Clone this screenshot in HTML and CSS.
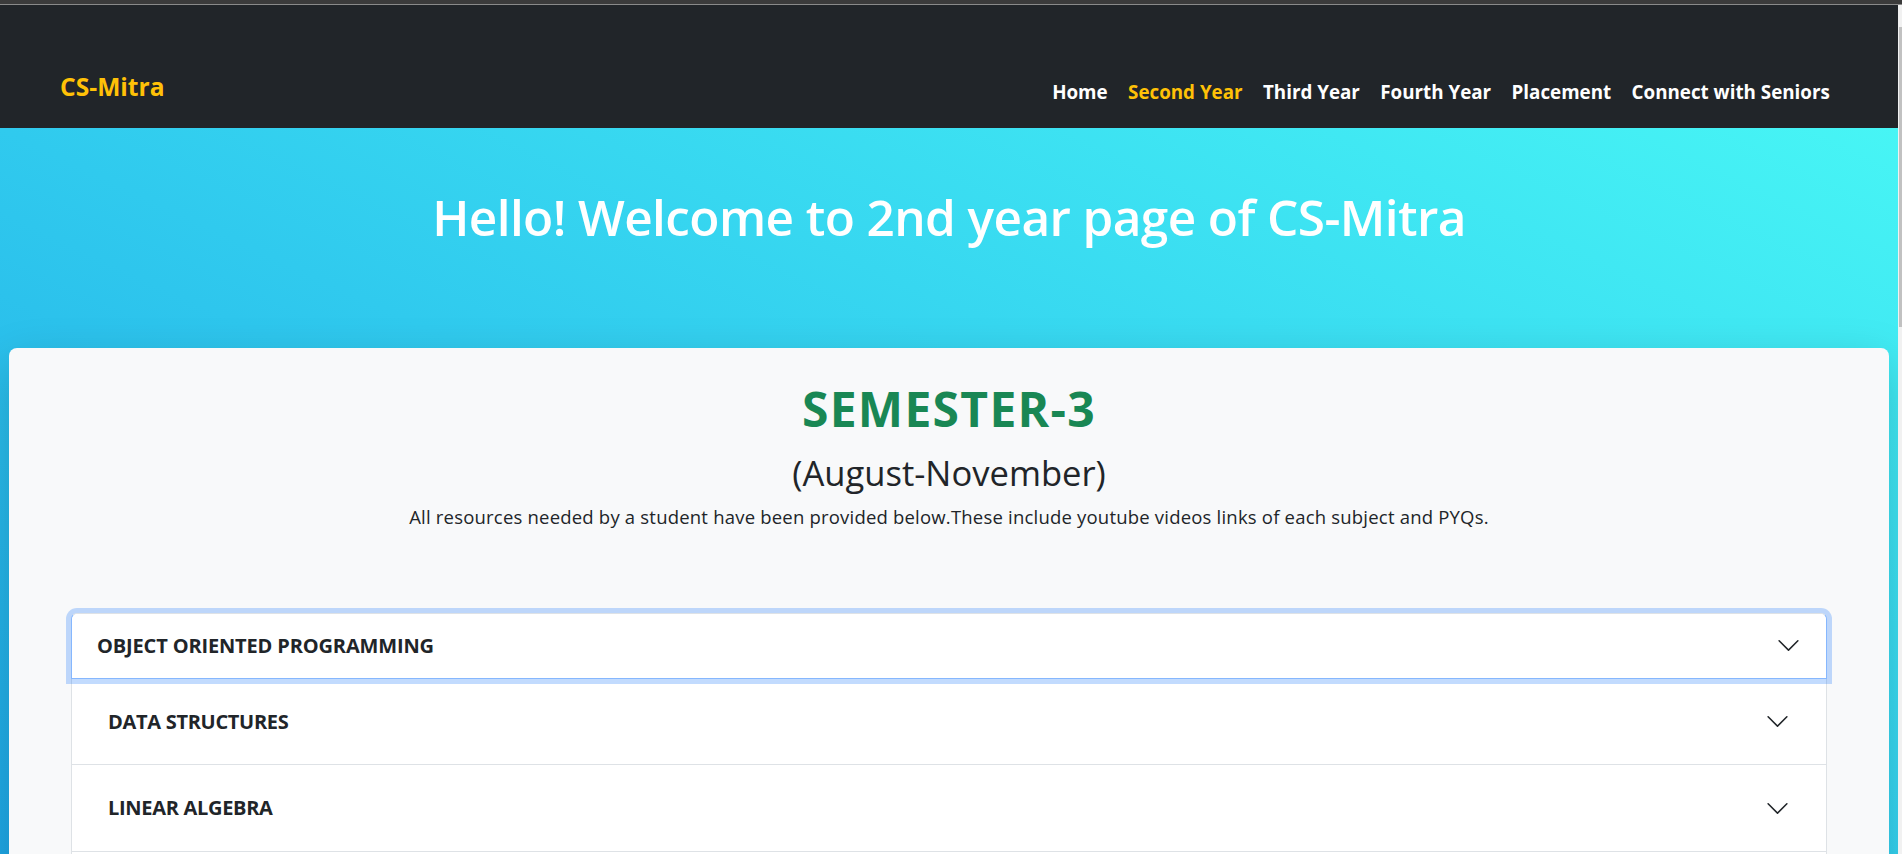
FILE: index.html
```html
<!DOCTYPE html>
<html lang="en">
<head>
<meta charset="utf-8">
<title>CS-Mitra | Second Year</title>
<link rel="stylesheet" href="styles.css">
</head>
<body>
<div class="chrome"></div>
<div class="viewport">
  <div class="site">
    <nav class="navbar">
      <a class="brand" href="#">CS-Mitra</a>
      <ul class="nav">
        <li><a class="nav-link" href="#">Home</a></li>
        <li><a class="nav-link active" href="#">Second Year</a></li>
        <li><a class="nav-link" href="#">Third Year</a></li>
        <li><a class="nav-link" href="#">Fourth Year</a></li>
        <li><a class="nav-link" href="#">Placement</a></li>
        <li><a class="nav-link" href="#">Connect with Seniors</a></li>
      </ul>
    </nav>
    <main class="page">
      <header class="hero">
        <h1 class="hero-title">Hello! Welcome to 2nd year page of CS-Mitra</h1>
      </header>
      <section class="card">
        <h2 class="sem-title">SEMESTER-3</h2>
        <h3 class="sem-months">(August-November)</h3>
        <p class="sem-desc">All resources needed by a student have been provided below.These include youtube videos links of each subject and PYQs.</p>
        <div class="accordion">
          <div class="acc-item acc-focus">
            <button class="acc-btn">OBJECT ORIENTED PROGRAMMING
              <svg class="chev" viewBox="0 0 16 16"><path d="M1.646 4.646a.5.5 0 0 1 .708 0L8 10.293l5.646-5.647a.5.5 0 0 1 .708.708l-6 6a.5.5 0 0 1-.708 0l-6-6a.5.5 0 0 1 0-.708z"/></svg>
            </button>
          </div>
          <div class="acc-item">
            <button class="acc-btn">DATA STRUCTURES
              <svg class="chev" viewBox="0 0 16 16"><path d="M1.646 4.646a.5.5 0 0 1 .708 0L8 10.293l5.646-5.647a.5.5 0 0 1 .708.708l-6 6a.5.5 0 0 1-.708 0l-6-6a.5.5 0 0 1 0-.708z"/></svg>
            </button>
          </div>
          <div class="acc-item">
            <button class="acc-btn">LINEAR ALGEBRA
              <svg class="chev" viewBox="0 0 16 16"><path d="M1.646 4.646a.5.5 0 0 1 .708 0L8 10.293l5.646-5.647a.5.5 0 0 1 .708.708l-6 6a.5.5 0 0 1-.708 0l-6-6a.5.5 0 0 1 0-.708z"/></svg>
            </button>
          </div>
          <div class="acc-item">
            <button class="acc-btn">DIGITAL ELECTRONICS
              <svg class="chev" viewBox="0 0 16 16"><path d="M1.646 4.646a.5.5 0 0 1 .708 0L8 10.293l5.646-5.647a.5.5 0 0 1 .708.708l-6 6a.5.5 0 0 1-.708 0l-6-6a.5.5 0 0 1 0-.708z"/></svg>
            </button>
          </div>
        </div>
      </section>
    </main>
  </div>
  <div class="scrollbar"><div class="thumb"></div></div>
</div>
</body>
</html>
```

FILE: styles.css
```css
* { box-sizing: border-box; }
html, body { margin: 0; padding: 0; }
body {
  overflow: hidden;
  height: 854px;
  font-family: "Open Sans", "Noto Sans", sans-serif;
  color: #212529;
  background: #f8f9fa;
}
.chrome {
  height: 5px;
  background: #3b3b3b;
  border-bottom: 1px solid #8a8a8a;
}
.viewport { display: flex; height: 849px; }
.site { flex: 1; min-width: 0; overflow: hidden; }
.scrollbar { width: 4px; background: #f1f1f1; padding-top: 22px; }
.thumb { width: 3px; height: 300px; background: #c1c1c1; margin-left: 1px; }

.navbar {
  height: 123px;
  background: #212529;
  display: flex;
  justify-content: space-between;
  align-items: flex-start;
  padding: 0 58px 0 60px;
}
.brand {
  margin-top: 63px;
  font-size: 24.6px;
  font-weight: 700;
  line-height: 37.5px;
  color: #ffc107;
  text-decoration: none;
}
.nav {
  margin: 73px 0 0;
  padding: 0;
  list-style: none;
  display: flex;
}
.nav-link {
  display: block;
  padding: 0 10.2px;
  font-size: 18.8px;
  font-weight: 700;
  line-height: 29.25px;
  color: #fff;
  text-decoration: none;
}
.nav-link.active { color: #ffc107; }

.page {
  min-height: 726px;
  background: linear-gradient(to top right, #1a9fe3 0%, #30caee 50%, #47f5f5 100%);
  padding-bottom: 40px;
}
.hero { padding: 58px 20px 99px; text-align: center; }
.hero-title {
  margin: 0;
  font-size: 49.5px;
  font-weight: 600;
  letter-spacing: -0.6px;
  line-height: 63.4px;
  color: #fff;
}
.card {
  margin: 0 9px;
  background: #f8f9fa;
  border-radius: 8px;
  box-shadow: 0 16px 48px rgba(0,0,0,.175);
  padding: 35px 62px 40px;
  text-align: center;
}
.sem-title {
  margin: 0;
  font-size: 48px;
  font-weight: 700;
  letter-spacing: 1.3px;
  line-height: 52.8px;
  color: #198754;
}
.sem-months {
  margin: 16px 0 0;
  font-size: 34.6px;
  font-weight: 500;
  line-height: 42.24px;
}
.sem-desc {
  margin: 10px 0 0;
  font-size: 18.5px;
  letter-spacing: 0.2px;
  line-height: 26.4px;
}
.accordion { margin-top: 82px; text-align: left; }
.acc-item {
  background: #fff;
  border: 1px solid #dee2e6;
  border-top: 0;
}
.acc-item:first-child { border-top: 1px solid #dee2e6; border-radius: 6px 6px 0 0; }
.acc-btn {
  width: 100%;
  display: flex;
  align-items: center;
  justify-content: space-between;
  background: #fff;
  border: 0;
  padding: 30px 36px;
  font-family: inherit;
  font-size: 20px;
  font-weight: 700;
  letter-spacing: -0.3px;
  line-height: 25.3px;
  color: #212529;
  text-align: left;
}
.acc-focus { position: relative; z-index: 2; border-color: #86b7fe; box-shadow: 0 0 0 5px rgba(13,110,253,.25); }
.acc-focus .acc-btn { padding: 19.5px 25px; border-radius: 6px 6px 0 0; letter-spacing: -0.15px; }
.chev { width: 25px; height: 25px; fill: #212529; flex-shrink: 0; }
```
